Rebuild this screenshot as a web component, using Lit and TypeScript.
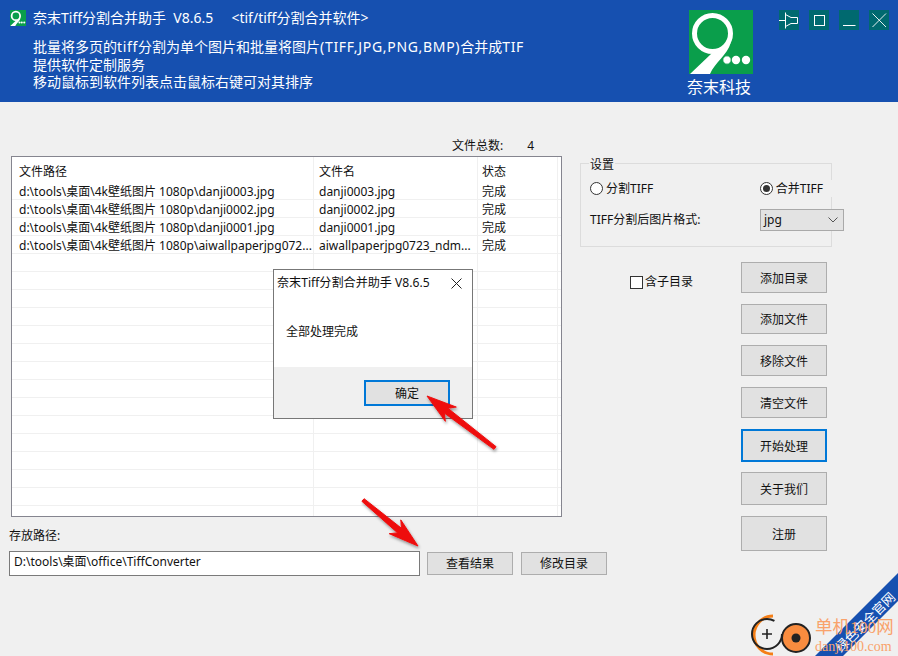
import { LitElement, html, css, svg } from "lit";
import { customElement } from "lit/decorators.js";

const files = [
  ["d:\\tools\\桌面\\4k壁纸图片 1080p\\danji0003.jpg", "danji0003.jpg"],
  ["d:\\tools\\桌面\\4k壁纸图片 1080p\\danji0002.jpg", "danji0002.jpg"],
  ["d:\\tools\\桌面\\4k壁纸图片 1080p\\danji0001.jpg", "danji0001.jpg"],
  ["d:\\tools\\桌面\\4k壁纸图片 1080p\\aiwallpaperjpg072...", "aiwallpaperjpg0723_ndm..."],
];
const actions = [
  ["添加目录", "h31", 0], ["添加文件", "h30", 11], ["移除文件", "h31", 11], ["清空文件", "h31", 11],
  ["开始处理", "h33 focus", 11], ["关于我们", "h33", 10], ["注册", "h35", 11],
] as const;

@customElement("app-root")
export class AppRoot extends LitElement {
  static styles = css`
    :host { display: block; width: 898px; height: 656px; position: relative; overflow: hidden; background: #f0f0f0;
      font: 12px/16px "Noto Sans", "Noto Sans CJK SC", sans-serif; color: #111; }
    * { box-sizing: border-box; }
    .header { height: 102px; background: #1650b0; color: #fff; display: flex; padding: 10px 9px 0 10px; }
    .intro { flex: 1; display: flex; flex-direction: column; }
    .title { display: flex; align-items: center; gap: 7px; height: 16px; font-size: 14px; white-space: pre; }
    .desc { margin: 12px 0 0 23px; font-size: 14px; line-height: 17.7px; }
    .lat { letter-spacing: .68px; }
    .brand { width: 64px; margin-right: 26px; display: flex; flex-direction: column; align-items: center; }
    .brand span { font-size: 16px; line-height: 22px; margin: 2px 4px 0 0; white-space: nowrap; }
    .winbtns { display: flex; gap: 10px; }
    .winbtn { width: 20px; height: 20px; background: #00696f; display: block; }
    .main { display: grid; grid-template-columns: 552px 1fr; padding: 35px 0 0 11px; column-gap: 17px; }
    .left { display: flex; flex-direction: column; }
    .count { display: flex; height: 19px; padding-left: 441px; gap: 24px; line-height: 18px; }
    .table { height: 361px; width: 551px; background: #fff; border: 1px solid #85858f; overflow: hidden; }
    .row { display: grid; grid-template-columns: 302px 164px 80px; height: 18px; border-bottom: 1px solid #f0f0f0; line-height: 20px; }
    .row.head { height: 25px; border: 0; line-height: 29px; }
    .row > div { padding-left: 5px; border-right: 1px solid #f0f0f0; white-space: nowrap; overflow: hidden; }
    .row > div:first-child { padding-left: 7px; }
    .row > div:last-child { padding-left: 4px; }
    .path { display: flex; flex-direction: column; width: 600px; margin: 11px 0 0 -2px; }
    .path label { height: 23px; line-height: 16px; }
    .pathrow { display: flex; align-items: center; gap: 7px; }
    .input { flex: none; width: 411px; height: 25px; background: #fff; border: 1px solid #7a7a7a; padding: 2px 4px; line-height: 16px; }
    .btn { flex: none; background: #e1e1e1; border: 1px solid #adadad; display: flex; align-items: center; justify-content: center; width: 86px; }
    .btn.focus { border: 2px solid #0078d7; }
    .h24 { height: 23px; } .h30 { height: 30px; } .h31 { height: 31px; } .h33 { height: 33px; } .h35 { height: 35px; }
    .pathrow .btn + .btn { margin-left: 1px; }
    .right { position: relative; padding-top: 26px; }
    .group { width: 252px; height: 84px; border: 1px solid #dcdcdc; position: relative; padding: 16px 0 0 9px; }
    .legend { position: absolute; top: -7px; left: 8px; background: #f0f0f0; padding: 0 1px; }
    .radios { display: flex; justify-content: space-between; height: 17px; align-items: center; margin-right: -2px; }
    .radio { display: flex; align-items: center; gap: 3px; background: #f0f0f0; padding-right: 10px; height: 17px; }
    .circle { width: 13px; height: 13px; border-radius: 50%; border: 1px solid #333; background: #fff; display: grid; place-items: center; }
    .circle.on::after { content: ""; width: 7px; height: 7px; border-radius: 50%; background: #333; }
    .fmt { display: flex; justify-content: space-between; align-items: center; margin-top: 12px; width: 254px; }
    .select { width: 84px; height: 22px; background: #e3e3e3; border: 1px solid #a9a9a9; display: flex; align-items: center; justify-content: space-between; padding: 0 5px 0 3px; }
    .lower { display: flex; margin: 15px 0 0 50px; align-items: flex-start; }
    .check { display: flex; align-items: center; gap: 2px; margin-top: 12px; width: 111px; }
    .box { width: 13px; height: 13px; border: 1px solid #333; background: #fff; }
    .stack { display: flex; flex-direction: column; }
    .stack .btn { padding-top: 2px; }
    .overlay { position: absolute; left: 0; top: 0; pointer-events: none; }
    .dialog { position: absolute; left: 273px; top: 269px; width: 200px; height: 150px; border: 1px solid #777; background: #fff; display: flex; flex-direction: column; }
    .dlgtitle { height: 26px; display: flex; justify-content: space-between; align-items: center; padding: 0 10px 0 3px; font-size: 12.1px; }
    .dlgbody { flex: 1; padding: 28px 0 0 12px; }
    .dlgfoot { height: 51px; background: #f0f0f0; padding: 13px 0 0 90px; }
    .dlgfoot .btn { height: 26px; padding-top: 1px; }
    .mark-a { position: absolute; left: 815px; top: 616px; font: 17.5px/22px "Liberation Serif", "Noto Sans CJK SC", serif; color: #f9a26b; white-space: nowrap; }
    .mark-b { position: absolute; left: 815px; top: 638px; font: 14px/17px "Liberation Serif", serif; color: #f9a26b; white-space: nowrap; }
    .band { position: absolute; left: 865px; top: 622px; font-size: 13px; line-height: 16px; color: #fff; transform: translate(-50%, -50%) rotate(-45deg); white-space: nowrap; }
  `;

  private arrow(x1: number, y1: number, x2: number, y2: number) {
    const a = Math.atan2(y2 - y1, x2 - x1), c = Math.cos(a), s = Math.sin(a);
    const len = Math.hypot(x2 - x1, y2 - y1);
    const p = (d: number, w: number) => `${x2 - c * d - s * w},${y2 - s * d + c * w}`;
    return svg`<polygon points="${p(0, 0)} ${p(30, 9)} ${p(24, 3)} ${p(len, 1.7)} ${p(len, -1.7)} ${p(24, -3)} ${p(30, -9)}" fill="#ee0f0f" stroke="#ee0f0f" stroke-linejoin="round" filter="url(#sh)"/>`;
  }

  render() {
    return html`
      <div class="header">
        <div class="intro">
          <div class="title">
            <svg width="16" height="16" viewBox="0 0 64 64">
              <rect width="64" height="64" fill="#0a9e4b"/>
              <circle cx="23.5" cy="23.5" r="17" fill="none" stroke="#fff" stroke-width="7"/>
              <path d="M1 64 L22 44 L42 34 C38 46 26 52 21 64Z" fill="#fff"/>
              <circle cx="38" cy="50" r="4.2" fill="#fff"/><circle cx="47" cy="50" r="4.2" fill="#fff"/><circle cx="57" cy="50" r="4.2" fill="#fff"/>
            </svg>
            <span>奈末Tiff分割合并助手  V8.6.5     &lt;tif/tiff分割合并软件&gt;</span>
          </div>
          <div class="desc">批量将多页的<span class="lat">tiff</span>分割为单个图片和批量将图片<span class="lat">(TIFF,JPG,PNG,BMP)</span>合并成<span class="lat">TIF</span><br>提供软件定制服务<br>移动鼠标到软件列表点击鼠标右键可对其排序</div>
        </div>
        <div class="brand">
          <svg width="64" height="64" viewBox="0 0 64 64">
            <rect width="64" height="64" fill="#0a9e4b"/>
            <circle cx="23.5" cy="23.5" r="18" fill="none" stroke="#fff" stroke-width="5"/>
            <path d="M1 64 L22 44 L42 32 C38 46 26 52 21 64Z" fill="#fff"/>
            <circle cx="38" cy="50" r="4.2" fill="#fff" stroke="#0a9e4b"/><circle cx="47" cy="50" r="4.2" fill="#fff"/><circle cx="57" cy="50" r="4.2" fill="#fff"/>
          </svg>
          <span>奈末科技</span>
        </div>
        <div class="winbtns">
          <svg class="winbtn" viewBox="0 0 20 20" fill="none" stroke="#fff"><path d="M0 10.5H6M6.5 2.5V18.5M6.5 4.5L12 7.5H18.5V13.5H12L6.5 16.5"/></svg>
          <svg class="winbtn" viewBox="0 0 20 20" fill="none" stroke="#fff"><rect x="5.5" y="5.5" width="10" height="10"/></svg>
          <svg class="winbtn" viewBox="0 0 20 20" fill="none" stroke="#fff"><path d="M4 15.5H16.5"/></svg>
          <svg class="winbtn" viewBox="0 0 20 20" fill="none" stroke="#fff" stroke-width=".9"><path d="M3.5 3.5L17 17M17 3.5L3.5 17"/></svg>
        </div>
      </div>

      <div class="main">
        <div class="left">
          <div class="count"><span>文件总数:</span><span>4</span></div>
          <div class="table">
            <div class="row head"><div>文件路径</div><div>文件名</div><div>状态</div></div>
            ${files.map(([p, n]) => html`<div class="row"><div>${p}</div><div>${n}</div><div>完成</div></div>`)}
            ${Array.from({ length: 15 }, () => html`<div class="row"><div></div><div></div><div></div></div>`)}
          </div>
          <div class="path">
            <label>存放路径:</label>
            <div class="pathrow">
              <div class="input">D:\\tools\\桌面\\office\\TiffConverter</div>
              <div class="btn h24">查看结果</div>
              <div class="btn h24">修改目录</div>
            </div>
          </div>
        </div>
        <div class="right">
          <div class="group">
            <div class="legend">设置</div>
            <div class="radios">
              <div class="radio"><i class="circle"></i>分割TIFF</div>
              <div class="radio"><i class="circle on"></i>合并TIFF</div>
            </div>
            <div class="fmt"><span>TIFF分割后图片格式:</span>
              <div class="select"><span>jpg</span>
                <svg width="10" height="6" viewBox="0 0 10 6" fill="none" stroke="#555"><path d="M.5.5L5 5 9.5.5"/></svg>
              </div>
            </div>
          </div>
          <div class="lower">
            <div class="check"><i class="box"></i>含子目录</div>
            <div class="stack">
              ${actions.map(([t, c, m]) => html`<div class="btn ${c}" style="margin-top:${m}px">${t}</div>`)}
            </div>
          </div>
        </div>
      </div>

      <div class="dialog">
        <div class="dlgtitle"><span>奈末Tiff分割合并助手 V8.6.5</span>
          <svg width="11" height="11" viewBox="0 0 11 11" fill="none" stroke="#222"><path d="M.5.5L10.5 10.5M10.5.5L.5 10.5"/></svg>
        </div>
        <div class="dlgbody">全部处理完成</div>
        <div class="dlgfoot"><div class="btn focus">确定</div></div>
      </div>

      <svg class="overlay" width="898" height="656">
        <defs><filter id="sh" x="-30%" y="-30%" width="160%" height="160%"><feDropShadow dx="1" dy="2" stdDeviation="1.5" flood-color="#000" flood-opacity=".4"/></filter></defs>
        ${this.arrow(495, 448, 427, 396)}
        ${this.arrow(363, 500, 418, 546)}
        <polygon points="815,656 898,573 898,601 843,656" fill="#1650b0"/>
        <g fill="none">
          <path d="M773 616 A17 17 0 0 0 773 654" stroke="#f57f17" stroke-width="3"/>
          <circle cx="767" cy="634" r="15" stroke="#222" stroke-width="2" stroke-dasharray="78 16"/>
          <path d="M767 629V639M762 634H772" stroke="#222" stroke-width="1.6"/>
          <circle cx="796" cy="638" r="14" fill="#f98c3f" stroke="#222" stroke-width="2"/>
          <circle cx="796" cy="638" r="4.5" fill="#222"/>
        </g>
      </svg>
      <div class="band">绿色安全官网</div>
      <div class="mark-a">单机100网</div>
      <div class="mark-b">danji100.com</div>
    `;
  }
}
